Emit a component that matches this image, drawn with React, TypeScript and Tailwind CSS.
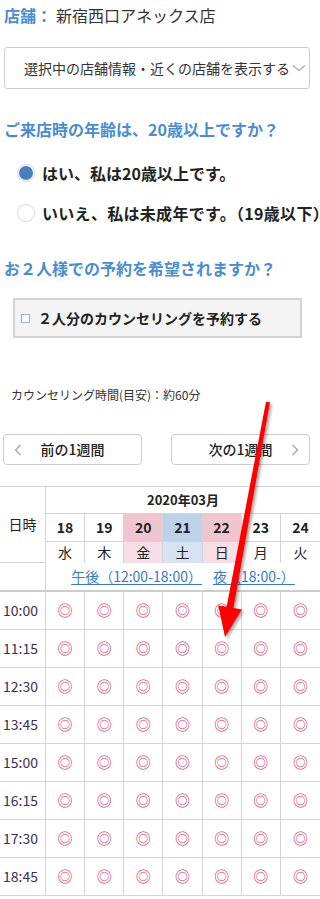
import React from 'react';

type Day = { d: string; w: string; dateBg: string; dayBg: string };

const days: Day[] = [
  { d: '18', w: '水', dateBg: 'bg-white', dayBg: 'bg-white' },
  { d: '19', w: '木', dateBg: 'bg-white', dayBg: 'bg-white' },
  { d: '20', w: '金', dateBg: 'bg-[#f1c5cf]', dayBg: 'bg-[#f7dee6]' },
  { d: '21', w: '土', dateBg: 'bg-[#bdd1e8]', dayBg: 'bg-[#d5e3f2]' },
  { d: '22', w: '日', dateBg: 'bg-[#f1c5cf]', dayBg: 'bg-[#f7dee6]' },
  { d: '23', w: '月', dateBg: 'bg-white', dayBg: 'bg-white' },
  { d: '24', w: '火', dateBg: 'bg-white', dayBg: 'bg-white' },
];

const times = ['10:00', '11:15', '12:30', '13:45', '15:00', '16:15', '17:30', '18:45'];

function Chevron({ dir }: { dir: 'left' | 'right' | 'down' }) {
  if (dir === 'down') {
    return (
      <svg width="14" height="8" viewBox="0 0 14 8" className="shrink-0">
        <path d="M1 1.5 L7 6.5 L13 1.5" fill="none" stroke="#b5b5b5" strokeWidth="1.6" />
      </svg>
    );
  }
  return (
    <svg width="8" height="12" viewBox="0 0 8 12" className="shrink-0">
      <path
        d={dir === 'left' ? 'M6.5 1 L1.5 6 L6.5 11' : 'M1.5 1 L6.5 6 L1.5 11'}
        fill="none"
        stroke="#b0b0b0"
        strokeWidth="1.6"
      />
    </svg>
  );
}

function Arrow() {
  return (
    <svg className="absolute left-0 top-0 pointer-events-none" width="320" height="899" viewBox="0 0 320 899">
      <defs>
        <filter id="sh" x="-50%" y="-10%" width="200%" height="120%">
          <feDropShadow dx="2" dy="2" stdDeviation="1.5" floodColor="#000" floodOpacity="0.35" />
        </filter>
      </defs>
      <polygon
        points="266,401.7 270,402.3 233.5,608 241.9,609.4 225,637 218.3,605.4 226.6,606.8"
        fill="#ff0000"
        filter="url(#sh)"
      />
    </svg>
  );
}

export default function App() {
  return (
    <div className="relative w-[320px] h-[899px] overflow-hidden bg-white text-[#333] font-['Noto_Sans_CJK_JP','Liberation_Sans',sans-serif]">
      <div className="h-[30px] flex items-center pl-[4px] text-[16px] whitespace-nowrap">
        <span className="font-bold text-[#4a8dce]">店舗：</span>
        <span className="ml-[4px]">新宿西口アネックス店</span>
      </div>

      <div className="mt-[17px] ml-[4px] w-[306px] h-[42px] border border-[#cccccc] rounded-[3px] flex items-center pl-[19px] text-[14px] whitespace-nowrap">
        <span>選択中の店舗情報・近くの店舗を表示する</span>
        <span className="ml-[2px]">
          <Chevron dir="down" />
        </span>
      </div>

      <div className="mt-[28px] h-[24px] flex items-center pl-[4px] text-[16px] font-bold text-[#4a8dce] whitespace-nowrap">
        ご来店時の年齢は、20歳以上ですか？
      </div>

      <div className="mt-[17px] h-[30px] flex items-center pl-[17px] whitespace-nowrap">
        <span className="shrink-0 w-[18px] h-[18px] rounded-full border border-[#d8d8d8] flex items-center justify-center bg-white">
          <span className="w-[14px] h-[14px] rounded-full bg-[#4a7fbd]" />
        </span>
        <span className="ml-[7px] text-[16px] font-bold text-[#222]">はい、私は20歳以上です。</span>
      </div>

      <div className="mt-[10px] h-[30px] flex items-center pl-[17px] whitespace-nowrap">
        <span className="shrink-0 w-[18px] h-[18px] rounded-full border border-[#d8d8d8] bg-white" />
        <span className="shrink-0 ml-[7px] text-[16px] font-bold text-[#222] tracking-[0.3px]">いいえ、私は未成年です。（19歳以下）</span>
      </div>

      <div className="mt-[28px] h-[24px] flex items-center pl-[4px] text-[16px] font-bold text-[#4a8dce] whitespace-nowrap">
        お２人様での予約を希望されますか？
      </div>

      <div className="mt-[18px] ml-[13px] w-[289px] h-[40px] border-2 border-[#d2d2d2] bg-[#f4f4f4] flex items-center pl-[6px] whitespace-nowrap">
        <span className="shrink-0 w-[9px] h-[9px] border border-[#8fb6e0] bg-white" />
        <span className="ml-[8px] text-[14px] font-bold text-[#222]">２人分のカウンセリングを予約する</span>
      </div>

      <div className="mt-[47px] h-[20px] flex items-center pl-[11px] text-[12px] whitespace-nowrap">
        カウンセリング時間(目安)：約60分
      </div>

      <div className="mt-[29px] pl-[3px] flex gap-[29px]">
        <div className="relative w-[139px] h-[31px] border border-[#cccccc] rounded-[4px] flex items-center justify-center text-[14px] font-medium text-[#222]">
          <span className="absolute left-[10px] top-[9px]">
            <Chevron dir="left" />
          </span>
          前の1週間
        </div>
        <div className="relative w-[139px] h-[31px] border border-[#cccccc] rounded-[4px] flex items-center justify-center text-[14px] font-medium text-[#222]">
          次の1週間
          <span className="absolute right-[10px] top-[9px]">
            <Chevron dir="right" />
          </span>
        </div>
      </div>

      <div className="mt-[21px] border-t border-[#d4d4d4]">
        <div className="flex border-b border-[#d4d4d4]">
          <div className="w-[46px] shrink-0 border-r border-[#d4d4d4] flex items-center justify-center text-[14px] text-[#222]">
            日時
          </div>
          <div className="flex-1 flex flex-col">
            <div className="h-[27px] border-b border-[#d4d4d4] flex items-center justify-center text-[13px] font-bold text-[#222]">
              2020年03月
            </div>
            <div className="grid grid-cols-7 h-[28px] border-b border-[#d4d4d4]">
              {days.map((d, i) => (
                <div
                  key={d.d}
                  className={`${d.dateBg} ${i < 6 ? 'border-r border-[#d4d4d4]' : ''} flex items-center justify-center text-[14px] font-bold text-[#222]`}
                >
                  {d.d}
                </div>
              ))}
            </div>
            <div className="grid grid-cols-7 h-[20px]">
              {days.map((d, i) => (
                <div
                  key={d.w}
                  className={`${d.dayBg} ${i < 6 ? 'border-r border-[#d4d4d4]' : ''} flex items-center justify-center text-[14px] text-[#222]`}
                >
                  {d.w}
                </div>
              ))}
            </div>
          </div>
        </div>

        <div className="flex h-[29px] border-b-2 border-[#cccccc]">
          <div className="w-[46px] shrink-0 border-r border-[#d4d4d4]" />
          <div className="flex-1 flex items-center justify-center gap-[11px] text-[14px] text-[#3a78c0] whitespace-nowrap">
            <span className="underline underline-offset-2">午後（12:00-18:00）</span>
            <span className="underline underline-offset-2">夜（18:00-）</span>
          </div>
        </div>

        {times.map((t) => (
          <div key={t} className="flex h-[38px] border-b border-[#d4d4d4]">
            <div className="w-[46px] shrink-0 border-r border-[#d4d4d4] flex items-center pl-[3px] text-[14px] text-[#3a2f55]">
              {t}
            </div>
            <div className="flex-1 grid grid-cols-7">
              {days.map((d, i) => (
                <div
                  key={d.d}
                  className={`${i < 6 ? 'border-r border-[#d4d4d4]' : ''} flex items-center justify-center text-[15px] text-[#d6336a]`}
                >
                  ◎
                </div>
              ))}
            </div>
          </div>
        ))}
      </div>

      <Arrow />
    </div>
  );
}
